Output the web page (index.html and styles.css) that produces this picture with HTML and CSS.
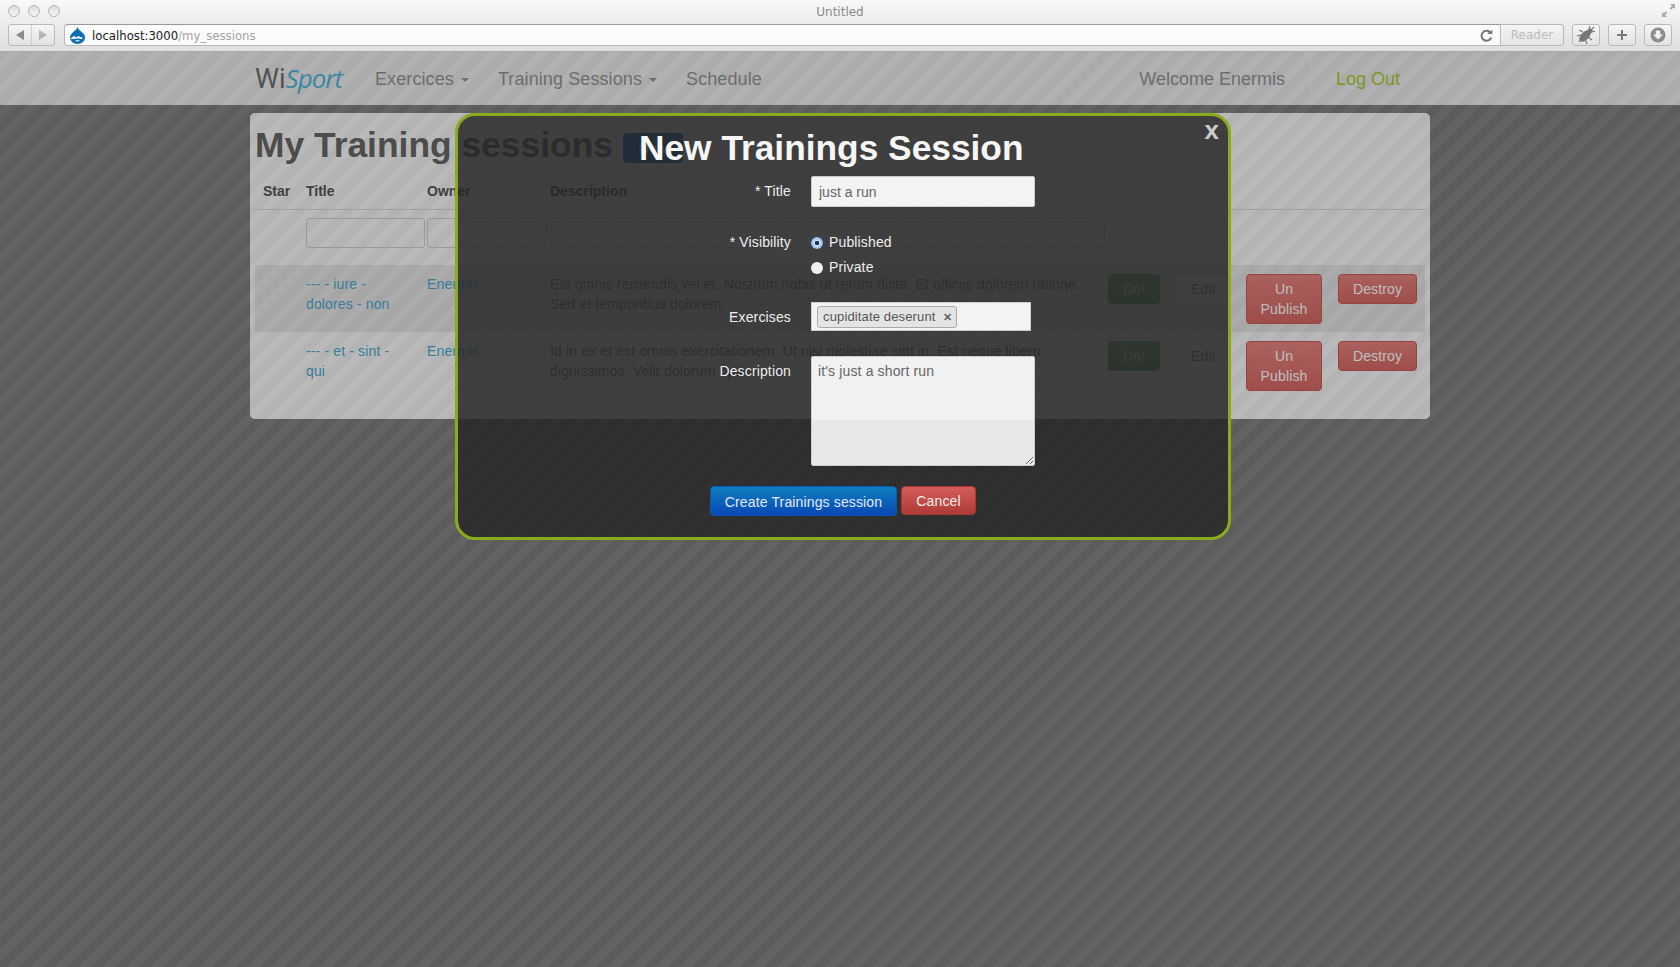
FILE: index.html
```html
<!DOCTYPE html>
<html lang="en">
<head>
    <meta charset="UTF-8">
    <title>My Training sessions</title>
    <link rel="stylesheet" href="styles.css">
</head>
<body>

    <div class="browser">
        <div class="titlebar">
            <div class="lights"><i></i><i></i><i></i></div>
            <span class="window-title">Untitled</span>
            <svg class="expand" width="15" height="15" viewBox="0 0 15 15"><path d="M9 1h5v5l-1.6-1.6-2.4 2.4-1.4-1.4 2.4-2.4zM6 14H1V9l1.6 1.6L5 8.2l1.4 1.4-2.4 2.4z" fill="#aaa"/></svg>
        </div>
        <div class="toolbar">
            <div class="backforward">
                <button class="tool-half"><svg width="10" height="10" viewBox="0 0 10 10"><path d="M9 0v10L1 5z" fill="#8a8a8a"/></svg></button>
                <button class="tool-half"><svg width="10" height="10" viewBox="0 0 10 10"><path d="M1 0v10l8-5z" fill="#b5b5b5"/></svg></button>
            </div>
            <div class="address">
                <svg class="favicon" width="15" height="17" viewBox="0 0 15 17">
                    <path d="M7.5 0c.6 2.4 2.4 3.3 4 4.7C13.300 6.200 15 8.300 15 10.300 15 14.200 11.700 17 7.500 17S0 14.200 0 10.300c0-2 1.700-4.100 3.500-5.600C5.100 3.300 6.900 2.400 7.500 0z" fill="#0a6fb0"/>
                    <path d="M2.300 10.700c.3-1.300 2-1.800 3-.9.700.6 1.500.6 2.200 0 .7-.6 1.500-.6 2.200 0 1 .9 2.700.4 3 .9-.2 1.300-1.600 1.600-2.700 1.100-.6-.3-1.400-.4-2.500-.4s-1.900.1-2.500.4c-1.100.5-4.900.2-4.700-1.100zM5 13.700c1.400-.6 3.600-.6 5 0-1.400.9-3.600.9-5 0z" fill="#fff"/>
                </svg>
                <span class="url">localhost:3000<em>/my_sessions</em></span>
                <svg class="reload" width="13" height="13" viewBox="0 0 13 13"><path d="M10.300 8.200A4 4 0 1 1 8.700 3.300L7.300 5h5V.5L10.500 2.200A6 6 0 1 0 12.300 8.700z" fill="#777"/></svg>
                <span class="reader">Reader</span>
            </div>
            <button class="tool-btn"><svg width="20" height="20" viewBox="0 0 20 20"><g fill="#777"><ellipse cx="9" cy="11" rx="4" ry="7" transform="rotate(45 9 11)"/><circle cx="14" cy="6" r="2.500"/></g><path d="M15 5l3-3M16 7l3-1M13 4l1-3M12 12l4 3M9 14l2 5M7 7L3 5M5 10l-4 1M6 13l-3 4" stroke="#777" stroke-width="1.200" fill="none"/></svg></button>
            <button class="tool-btn"><svg width="12" height="12" viewBox="0 0 12 12"><path d="M5 1h2v4h4v2H7v4H5V7H1V5h4z" fill="#777"/></svg></button>
            <button class="tool-btn"><svg width="16" height="16" viewBox="0 0 16 16"><circle cx="8" cy="8" r="7.500" fill="#8c8c8c"/><path d="M5.800 3.500h4.400v4H13L8 12.500 3 7.500h2.800z" fill="#f2f2f2"/></svg></button>
        </div>
    </div>

    <div class="page">
        <nav class="navbar">
            <a class="brand"><span class="brand-wi">Wi</span><span class="brand-sport">Sport</span></a>
            <ul class="nav">
                <li class="drop">Exercices</li>
                <li class="drop">Training Sessions</li>
                <li>Schedule</li>
            </ul>
            <div class="nav-right">
                <span class="welcome">Welcome Enermis</span>
                <a class="logout">Log Out</a>
            </div>
        </nav>

        <div class="panel">
            <h1>My Training sessions <a class="btn btn-blue btn-head">New</a></h1>
            <table>
                <colgroup>
                    <col class="col-star"><col class="col-title"><col class="col-owner"><col class="col-desc">
                    <col class="col-do"><col class="col-edit"><col class="col-unpub"><col class="col-destroy">
                </colgroup>
                <thead>
                    <tr>
                        <th>Star</th><th>Title</th><th>Owner</th><th>Description</th>
                        <th></th><th></th><th></th><th></th>
                    </tr>
                    <tr class="filters">
                        <td></td>
                        <td><input class="filter f-title" type="text"></td>
                        <td><input class="filter f-owner" type="text"></td>
                        <td><input class="filter f-desc" type="text"></td>
                        <td colspan="4"></td>
                    </tr>
                </thead>
                <tbody>
                    <tr class="odd">
                        <td></td>
                        <td class="cell-title"><a>--- - iure - dolores - non</a></td>
                        <td><a>Enermis</a></td>
                        <td>Est omnis reiciendis vel et. Nostrum nobis ut rerum dicta. Et officiis dolorem ratione. Sed et temporibus dolorem.</td>
                        <td><a class="btn btn-green">Do!</a></td>
                        <td><a class="btn btn-plain">Edit</a></td>
                        <td><a class="btn btn-red btn-unpublish">Un Publish</a></td>
                        <td><a class="btn btn-red btn-destroy">Destroy</a></td>
                    </tr>
                    <tr>
                        <td></td>
                        <td class="cell-title"><a>--- - et - sint - qui</a></td>
                        <td><a>Enermis</a></td>
                        <td>Id in ex et est omnis exercitationem. Ut nisi molestiae sint in. Est neque libero dignissimos. Velit dolorum optio quia.</td>
                        <td><a class="btn btn-green">Do!</a></td>
                        <td><a class="btn btn-plain">Edit</a></td>
                        <td><a class="btn btn-red btn-unpublish">Un Publish</a></td>
                        <td><a class="btn btn-red btn-destroy">Destroy</a></td>
                    </tr>
                </tbody>
            </table>
        </div>

        <div class="overlay"></div>

        <div class="modal">
            <a class="close">x</a>
            <h2>New Trainings Session</h2>
            <form>
                <div class="field field-title">
                    <label>* Title</label>
                    <input class="text" type="text" value="just a run">
                </div>
                <div class="field field-visibility">
                    <label>* Visibility</label>
                    <div class="radios">
                        <span class="radio-row"><input type="radio" name="vis" checked> Published</span>
                        <span class="radio-row"><input type="radio" name="vis"> Private</span>
                    </div>
                </div>
                <div class="field field-exercises">
                    <label>Exercises</label>
                    <div class="chosen"><span class="chip">cupiditate deserunt <b>&#10005;</b></span></div>
                </div>
                <div class="field field-desc">
                    <label>Description</label>
                    <textarea>it's just a short run</textarea>
                </div>
                <div class="actions">
                    <a class="btn btn-create">Create Trainings session</a>
                    <a class="btn btn-cancel">Cancel</a>
                </div>
            </form>
        </div>
    </div>

</body>
</html>
```

FILE: styles.css
```css
html, body {
    margin: 0;
    height: 100%;
    overflow: hidden;
}
body {
    display: flex;
    flex-direction: column;
    font-family: "Liberation Sans", Arial, sans-serif;
    font-size: 14px;
    line-height: 20px;
    color: #333;
}

/* browser window */
.browser {
    height: 52px;
    box-sizing: border-box;
    background: linear-gradient(#f9f9f9, #dedede);
    border-bottom: 1px solid #a8a8a8;
    font-family: "DejaVu Sans", sans-serif;
}
.titlebar {
    height: 24px;
    position: relative;
    text-align: center;
}
.lights {
    position: absolute;
    left: 8px;
    top: 5px;
    display: flex;
    gap: 8px;
}
.lights i {
    width: 10px;
    height: 10px;
    border: 1px solid #b4b4b4;
    border-radius: 50%;
    background: linear-gradient(#dcdcdc, #f6f6f6);
}
.window-title {
    font-size: 12px;
    line-height: 24px;
    color: #8b8b8b;
}
.expand {
    position: absolute;
    right: 4px;
    top: 3px;
}
.toolbar {
    display: flex;
    align-items: flex-start;
    padding-left: 8px;
}
.backforward {
    display: flex;
    width: 48px;
    height: 22px;
    box-sizing: border-box;
    border: 1px solid #b9b9b9;
    border-radius: 3px;
    background: linear-gradient(#f6f6f6, #e2e2e2);
}
.tool-half {
    flex: 1;
    padding: 0;
    border: 0;
    background: none;
    display: flex;
    align-items: center;
    justify-content: center;
}
.tool-half + .tool-half {
    border-left: 1px solid #cfcfcf;
}
.address {
    display: flex;
    flex: none;
    align-items: center;
    width: 1500px;
    height: 22px;
    box-sizing: border-box;
    margin-left: 9px;
    margin-right: 8px;
    padding-left: 5px;
    border: 1px solid #b9b9b9;
    border-top-color: #999;
    border-radius: 4px;
    background: #fbfbfb;
}
.favicon {
    margin-right: 7px;
}
.url {
    font-size: 11.7px;
    padding-top: 2px;
    color: #222;
    flex: 1;
}
.url em {
    font-style: normal;
    color: #a3a3a3;
}
.reload {
    margin-right: 7px;
}
.reader {
    width: 64px;
    height: 22px;
    margin: -1px -1px -1px 0;
    box-sizing: border-box;
    border: 1px solid #b9b9b9;
    border-radius: 0 3px 3px 0;
    background: linear-gradient(#f5f5f5, #e4e4e4);
    color: #bdbdbd;
    font-size: 12px;
    line-height: 20px;
    text-align: center;
}
.tool-btn {
    flex: none;
    width: 28px;
    height: 22px;
    padding: 0;
    margin-right: 8px;
    border: 1px solid #b9b9b9;
    border-radius: 3px;
    background: linear-gradient(#f6f6f6, #e2e2e2);
    display: flex;
    align-items: center;
    justify-content: center;
}

/* page */
.page {
    flex: 1;
    position: relative;
    background: repeating-linear-gradient(135deg, #7b7b7b 0, #7b7b7b 8.5px, #848484 8.5px, #848484 17px);
    background-attachment: fixed;
    overflow: hidden;
}
.navbar {
    height: 53px;
    box-sizing: border-box;
    padding: 0 280px 0 255px;
    display: flex;
    align-items: center;
    background: repeating-linear-gradient(135deg, #e5e5e5 0, #e5e5e5 8.5px, #ececec 8.5px, #ececec 17px);
    background-attachment: fixed;
    font-size: 18px;
    color: #929292;
}
.brand {
    width: 120px;
    flex: none;
    font-size: 27px;
    line-height: 30px;
    white-space: nowrap;
}
.brand-wi {
    font-family: Roboto, sans-serif;
    color: #6e6e6e;
}
.brand-sport {
    font-family: "Open Sans", sans-serif;
    font-style: italic;
    font-size: 26px;
    color: #52b4dc;
    letter-spacing: -1px;
}
.nav {
    display: flex;
    list-style: none;
    margin: 0;
    padding: 0;
    gap: 29px;
    flex: 1;
    letter-spacing: 0.1px;
}
.drop::after {
    content: "";
    display: inline-block;
    margin-left: 7px;
    vertical-align: 3px;
    border-left: 4px solid transparent;
    border-right: 4px solid transparent;
    border-top: 4px solid #929292;
}
.nav-right {
    display: flex;
    align-self: stretch;
    align-items: center;
}
.welcome {
    padding-right: 25px;
    border-right: 1px solid #f2f2f2;
    height: 53px;
    line-height: 55px;
}
.logout {
    padding-left: 25px;
    color: #a4cc2c;
}

.panel {
    position: absolute;
    left: 250px;
    top: 61px;
    width: 1180px;
    height: 306px;
    box-sizing: border-box;
    padding: 0 5px;
    border-radius: 5px;
    background: repeating-linear-gradient(135deg, #efefef 0, #efefef 8.5px, #f7f7f7 8.5px, #f7f7f7 17px);
    background-attachment: fixed;
}
h1 {
    margin: 9px 0 0;
    font-size: 35.4px;
    line-height: 46px;
    color: #666;
}
.btn {
    display: inline-block;
    box-sizing: border-box;
    padding: 4px 14px;
    border: 1px solid;
    border-radius: 4px;
    font-size: 14px;
    line-height: 20px;
    text-align: center;
    font-weight: normal;
    vertical-align: top;
}
.btn-head {
    margin: 11px 0 0;
    width: 60px;
    height: 30px;
}
.btn-blue {
    background: #2b70c2;
    border-color: #2b70c2;
    color: #fff;
}
.btn-green {
    background: linear-gradient(#78b878, #62a862);
    border-color: #62a862;
}
.btn-plain {
    background: #f5f5f5;
    border-color: #ddd;
}
.btn-red {
    background: linear-gradient(#e47c78, #d2605c);
    border-color: #c45450;
    opacity: 0.94;
}
table {
    width: 1170px;
    table-layout: fixed;
    border-collapse: collapse;
    margin-top: 5px;
}
.col-star { width: 43px; }
.col-title { width: 121px; }
.col-owner { width: 123px; }
.col-desc { width: 558px; }
.col-do { width: 68px; }
.col-edit { width: 70px; }
.col-unpub { width: 92px; }
.col-destroy { width: 95px; }
th, td {
    padding: 9px 8px 8px;
    text-align: left;
    vertical-align: top;
}
th {
    height: 20px;
    padding: 8px;
    border-bottom: 1px solid #d4d4d4;
    color: #555;
}
.filters td {
    height: 30px;
    padding: 8px 0 17px 8px;
}
.filter {
    display: block;
    box-sizing: border-box;
    height: 30px;
    border: 1px solid #ccc;
    border-radius: 3px;
    background: transparent;
}
.f-title { width: 119px; }
.f-owner { width: 120px; }
.f-desc { width: 555px; }
tbody td {
    color: #777;
    height: 50px;
    letter-spacing: 0.14px;
}
td a {
    color: #4aa8d0;
}
.cell-title {
    padding-right: 14px;
}
.odd td {
    background: rgba(0, 0, 0, 0.07);
}
td .btn {
    color: #fff;
    padding: 4px 14px;
}
td .btn-green {
    color: #d8f0d8;
}
td .btn-plain {
    color: #888;
}
td .btn-unpublish {
    width: 76px;
    padding: 4px 8px;
}
td .btn-destroy {
    width: 79px;
    padding: 4px 6px;
}

.overlay {
    position: absolute;
    inset: 0;
    background: rgba(0, 0, 0, 0.25);
}

/* modal */
.modal {
    position: absolute;
    left: 455px;
    top: 61px;
    width: 776px;
    height: 427px;
    box-sizing: border-box;
    border: 3px solid #89ab1c;
    border-radius: 20px;
    background: rgba(36, 36, 36, 0.82);
    color: #eee;
    letter-spacing: 0.14px;
}
.close {
    position: absolute;
    top: -1px;
    right: 9px;
    font-size: 26px;
    line-height: 30px;
    font-weight: bold;
    color: #ccc;
}
h2 {
    margin: 9px 0 0;
    padding-left: 181px;
    font-size: 35.3px;
    line-height: 46px;
    letter-spacing: 0;
    color: #f6f6f6;
}
.field {
    display: flex;
    align-items: flex-start;
}
.field label {
    width: 333px;
    text-align: right;
    margin-right: 20px;
    padding-top: 5px;
    flex: none;
}
.field-title {
    margin-top: 5px;
}
.text {
    width: 224px;
    height: 31px;
    box-sizing: border-box;
    padding: 0 7px;
    border: 1px solid #ccc;
    border-radius: 2px;
    background: #f3f3f3;
    font: 14px "Liberation Sans", Arial, sans-serif;
    color: #666;
}
.field-visibility {
    margin-top: 25px;
}
.field-visibility label {
    padding-top: 0;
}
.radios {
    display: flex;
    flex-direction: column;
    gap: 5px;
}
.radio-row {
    display: flex;
    align-items: center;
    gap: 6px;
    height: 20px;
}
.radio-row input {
    appearance: none;
    width: 12px;
    height: 12px;
    margin: 2px 0 0;
    border-radius: 50%;
    background: #f0f0f0;
    border: 0;
}
.radio-row input:checked {
    background: radial-gradient(circle, #1d3557 0, #1d3557 2px, #cfe2f8 2.500px, #86b2e8 6px);
}
.field-exercises {
    margin-top: 25px;
}
.chosen {
    width: 220px;
    height: 29px;
    box-sizing: border-box;
    padding: 3px 5px;
    border: 1px solid #ccc;
    background: #f3f3f3;
}
.chip {
    display: inline-block;
    box-sizing: border-box;
    width: 140px;
    height: 22px;
    padding-left: 5px;
    border: 1px solid #aaa;
    border-radius: 3px;
    background: #e4e4e4;
    font-size: 13px;
    line-height: 20px;
    color: #555;
    white-space: nowrap;
}
.chip b {
    font-size: 11px;
    color: #666;
    margin-left: 4px;
}
.field-desc {
    margin-top: 25px;
}
.field-desc label {
    padding-top: 5px;
}
textarea {
    width: 224px;
    height: 110px;
    box-sizing: border-box;
    padding: 4px 6px;
    border: 1px solid #ccc;
    border-radius: 2px;
    background: linear-gradient(rgba(255, 255, 255, 0.93) 63px, rgba(246, 246, 246, 0.93) 63px);
    font: 14px/20px "Liberation Sans", Arial, sans-serif;
    letter-spacing: 0.14px;
    color: #666;
    resize: both;
    display: block;
}
.actions {
    display: flex;
    gap: 4px;
    margin: 20px 0 0 252px;
}
.btn-create {
    width: 187px;
    height: 30px;
    padding: 5px 0 0;
    background: linear-gradient(#0f7fc0, #0848b4);
    border-color: #0a55b5;
    color: #e4e8ee;
}
.btn-cancel {
    width: 75px;
    height: 29px;
    padding: 4px 0 0;
    background: linear-gradient(#d45e59, #ac3a36);
    border-color: #a83733;
    color: #eee;
}
```
